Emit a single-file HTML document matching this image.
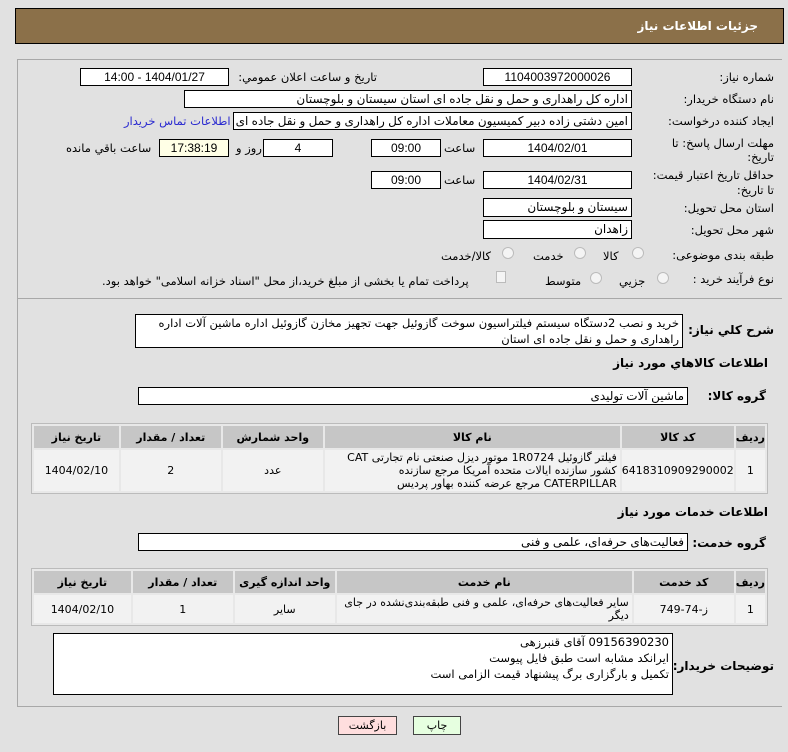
<!DOCTYPE html>
<html><head><meta charset="utf-8"><style>
*{box-sizing:border-box;margin:0;padding:0}
body{width:788px;height:752px;background:#e1e1e1;font-family:"DejaVu Sans","Liberation Sans",sans-serif;font-size:11px;color:#000;position:relative;overflow:hidden}
.a{position:absolute;white-space:nowrap}
.box{position:absolute;background:#fff;border:1px solid #000;text-align:center;line-height:16px;font-size:12px;font-family:"Liberation Sans","DejaVu Sans",sans-serif;direction:rtl;overflow:hidden;white-space:nowrap}
.lb{position:absolute;direction:rtl;white-space:nowrap;font-size:11.5px}
.b{font-weight:bold}
.rad{position:absolute;width:12px;height:12px;border-radius:50%;border:1px solid #bbb;background:#f4f4f4}
table{position:absolute;border-collapse:separate;border-spacing:2px;border:1px solid #bbb;background:#e8e8e8;direction:rtl}
th{background:#c6c6c6;font-weight:bold;font-size:11px;height:22px}
td{background:#f2f2f2;text-align:center;font-size:11px}
</style></head><body>
<div class="a" style="left:15px;top:8px;width:769px;height:36px;background:#8b7049;border:1px solid #000"></div>
<div class="lb b" style="right:30px;top:19px;color:#fff;font-size:12px">جزئیات اطلاعات نیاز</div>
<div class="a" style="left:17px;top:59px;width:765px;height:648px;border:1px solid #a8a8a8;border-right:none;background:#e1e1e1"></div>

<div class="lb" style="right:14px;top:70px">شماره نیاز:</div>
<div class="box" style="left:483px;top:68px;width:149px;height:18px">1104003972000026</div>
<div class="lb" style="right:411px;top:70px">تاریخ و ساعت اعلان عمومي:</div>
<div class="box" style="left:80px;top:68px;width:149px;height:18px">1404/01/27 - 14:00</div>

<div class="lb" style="right:14px;top:92px">نام دستگاه خریدار:</div>
<div class="box" style="left:184px;top:90px;width:448px;height:18px;text-align:right;padding-right:3px">اداره کل راهداری و حمل و نقل جاده ای استان سیستان و بلوچستان</div>

<div class="lb" style="right:14px;top:114px">ایجاد کننده درخواست:</div>
<div class="box" style="left:233px;top:112px;width:399px;height:18px;text-align:right;padding-right:3px">امین دشتی زاده دبیر کمیسیون معاملات اداره کل راهداری و حمل و نقل جاده ای</div>
<div class="lb" style="left:124px;top:114px;color:#2a2ad0">اطلاعات تماس خریدار</div>

<div class="lb" style="right:14px;top:136px;line-height:14px;text-align:right">مهلت ارسال پاسخ: تا<br>تاریخ:</div>
<div class="box" style="left:483px;top:139px;width:149px;height:18px">1404/02/01</div>
<div class="lb" style="left:444px;top:141px">ساعت</div>
<div class="box" style="left:371px;top:139px;width:70px;height:18px">09:00</div>
<div class="box" style="left:263px;top:139px;width:70px;height:18px">4</div>
<div class="lb" style="left:236px;top:141px">روز و</div>
<div class="box" style="left:159px;top:139px;width:70px;height:18px;background:#ffffe6">17:38:19</div>
<div class="lb" style="left:66px;top:141px">ساعت باقي مانده</div>

<div class="lb" style="right:14px;top:168px;line-height:15px;text-align:right">حداقل تاریخ اعتبار قیمت:<br>تا تاریخ:</div>
<div class="box" style="left:483px;top:171px;width:149px;height:18px">1404/02/31</div>
<div class="lb" style="left:444px;top:173px">ساعت</div>
<div class="box" style="left:371px;top:171px;width:70px;height:18px">09:00</div>

<div class="lb" style="right:14px;top:201px">استان محل تحویل:</div>
<div class="box" style="left:483px;top:198px;width:149px;height:19px;text-align:right;padding-right:3px">سیستان و بلوچستان</div>
<div class="lb" style="right:14px;top:223px">شهر محل تحویل:</div>
<div class="box" style="left:483px;top:220px;width:149px;height:19px;text-align:right;padding-right:3px">زاهدان</div>

<div class="lb" style="right:14px;top:248px">طبقه بندی موضوعی:</div>
<div class="rad" style="left:632px;top:247px"></div><div class="lb" style="left:603px;top:249px">کالا</div>
<div class="rad" style="left:574px;top:247px"></div><div class="lb" style="left:533px;top:249px">خدمت</div>
<div class="rad" style="left:502px;top:247px"></div><div class="lb" style="left:441px;top:249px">کالا/خدمت</div>

<div class="lb" style="right:14px;top:272px">نوع فرآیند خرید :</div>
<div class="rad" style="left:657px;top:272px"></div><div class="lb" style="left:619px;top:274px">جزيي</div>
<div class="rad" style="left:590px;top:272px"></div><div class="lb" style="left:545px;top:274px">متوسط</div>
<div class="a" style="left:496px;top:271px;width:10px;height:12px;border:1px solid #bbb;background:#f4f4f4"></div>
<div class="lb" style="left:102px;top:274px">پرداخت تمام یا بخشی از مبلغ خرید،از محل "اسناد خزانه اسلامی" خواهد بود.</div>
<div class="a" style="left:17px;top:298px;width:765px;border-top:1px solid #a8a8a8"></div>

<div class="lb b" style="right:14px;top:323px;font-size:12px">شرح کلي نیاز:</div>
<div class="box" style="left:135px;top:314px;width:548px;height:34px;text-align:right;padding-right:3px;line-height:16px;white-space:normal;font-size:11.5px;font-family:'DejaVu Sans',sans-serif">خرید و نصب 2دستگاه سیستم فیلتراسیون سوخت گازوئیل جهت تجهیز مخازن گازوئیل اداره ماشین آلات اداره راهداری و حمل و نقل جاده ای استان</div>

<div class="lb b" style="right:20px;top:356px;font-size:12px">اطلاعات کالاهاي مورد نیاز</div>
<div class="lb b" style="right:22px;top:389px;font-size:12px">گروه کالا:</div>
<div class="box" style="left:138px;top:387px;width:550px;height:18px;text-align:right;padding-right:3px;line-height:16px">ماشین آلات تولیدی</div>

<table style="left:31px;top:423px;width:737px">
<tr><th style="width:24px">ردیف</th><th style="width:100px">کد کالا</th><th style="width:295px">نام کالا</th><th style="width:100px">واحد شمارش</th><th style="width:100px">تعداد / مقدار</th><th>تاریخ نیاز</th></tr>
<tr style="height:41px"><td>1</td><td>6418310909290002</td><td style="text-align:right;padding-right:3px;line-height:13px">فیلتر گازوئیل 1R0724 موتور دیزل صنعتی نام تجارتی CAT کشور سازنده ایالات متحده آمریکا مرجع سازنده CATERPILLAR مرجع عرضه کننده بهاور پردیس</td><td>عدد</td><td>2</td><td>1404/02/10</td></tr>
</table>

<div class="lb b" style="right:20px;top:505px;font-size:12px">اطلاعات خدمات مورد نیاز</div>
<div class="lb b" style="right:22px;top:536px;font-size:12px">گروه خدمت:</div>
<div class="box" style="left:138px;top:533px;width:550px;height:18px;text-align:right;padding-right:3px;line-height:16px">فعالیت‌های حرفه‌ای، علمی و فنی</div>

<table style="left:31px;top:568px;width:737px">
<tr><th style="width:24px">ردیف</th><th style="width:100px">کد خدمت</th><th style="width:295px">نام خدمت</th><th style="width:100px">واحد اندازه گیری</th><th style="width:100px">تعداد / مقدار</th><th>تاریخ نیاز</th></tr>
<tr style="height:28px"><td>1</td><td>ز-74-749</td><td style="text-align:right;padding-right:3px;line-height:13px">سایر فعالیت‌های حرفه‌ای، علمی و فنی طبقه‌بندی‌نشده در جای دیگر</td><td>سایر</td><td>1</td><td>1404/02/10</td></tr>
</table>

<div class="lb b" style="right:14px;top:659px;font-size:12px">توضیحات خریدار:</div>
<div class="box" style="left:53px;top:633px;width:620px;height:62px;text-align:right;padding-right:3px;line-height:16px;white-space:normal;font-family:'DejaVu Sans',sans-serif;font-size:11.5px">09156390230 آقای قنبرزهی<br>ایرانکد مشابه است طبق فایل پیوست<br>تکمیل و بارگزاری برگ پیشنهاد قیمت الزامی است</div>

<div class="box" style="left:338px;top:716px;width:59px;height:19px;background:#ffdede;border-color:#444;line-height:17px;font-family:'DejaVu Sans',sans-serif;font-size:11px">بازگشت</div>
<div class="box" style="left:413px;top:716px;width:48px;height:19px;background:#e6ffe0;border-color:#444;line-height:17px;font-family:'DejaVu Sans',sans-serif;font-size:11px">چاپ</div>
</body></html>
